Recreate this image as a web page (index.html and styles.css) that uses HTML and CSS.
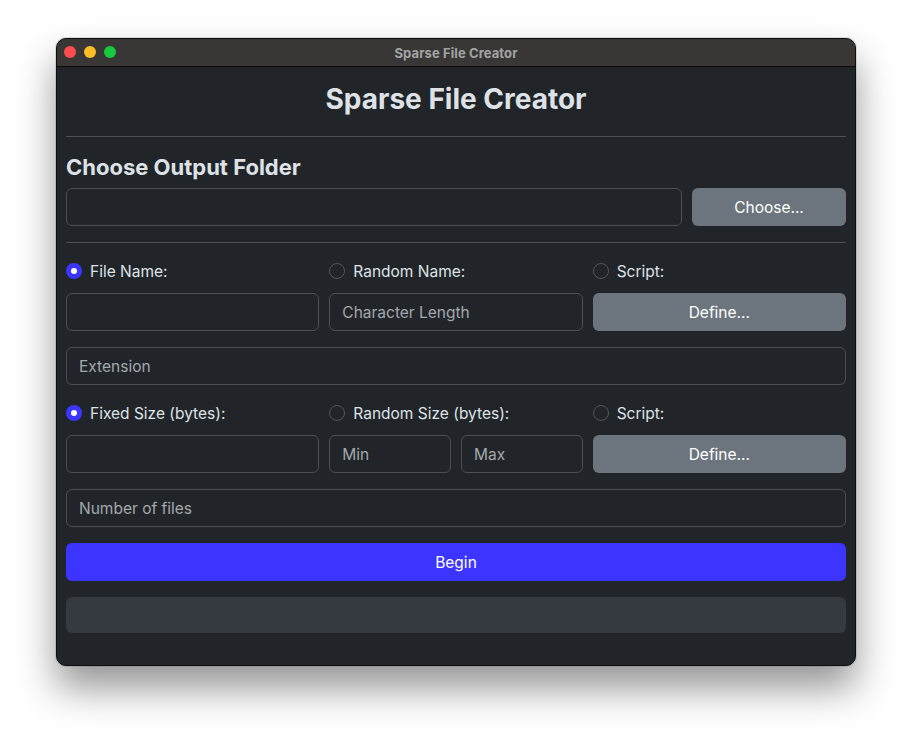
FILE: index.html
```html
<!DOCTYPE html>
<html lang="en">
<head>
<meta charset="utf-8">
<title>Sparse File Creator</title>
<link rel="stylesheet" href="styles.css">
</head>
<body>
<div class="window">
  <div class="titlebar">
    <div class="lights">
      <span class="light red"></span>
      <span class="light yellow"></span>
      <span class="light green"></span>
    </div>
    <div class="wintitle">Sparse File Creator</div>
  </div>
  <div class="content">
    <h1 class="title">Sparse File Creator</h1>
    <hr class="sep">
    <h4 class="section">Choose Output Folder</h4>
    <div class="row folder-row">
      <input class="field grow" type="text">
      <button class="btn btn-secondary choose">Choose...</button>
    </div>
    <hr class="sep sep2">
    <div class="form">
      <div class="group">
        <div class="grid3">
          <label class="radio"><span class="dot checked"></span>File Name:</label>
          <label class="radio"><span class="dot"></span>Random Name:</label>
          <label class="radio"><span class="dot"></span>Script:</label>
        </div>
        <div class="grid3">
          <input class="field" type="text">
          <input class="field" type="text" placeholder="Character Length">
          <button class="btn btn-secondary">Define...</button>
        </div>
      </div>
      <input class="field" type="text" placeholder="Extension">
      <div class="group">
        <div class="grid3">
          <label class="radio"><span class="dot checked"></span>Fixed Size (bytes):</label>
          <label class="radio"><span class="dot"></span>Random Size (bytes):</label>
          <label class="radio"><span class="dot"></span>Script:</label>
        </div>
        <div class="grid3">
          <input class="field" type="text">
          <div class="pair">
            <input class="field" type="text" placeholder="Min">
            <input class="field" type="text" placeholder="Max">
          </div>
          <button class="btn btn-secondary">Define...</button>
        </div>
      </div>
      <input class="field" type="text" placeholder="Number of files">
      <button class="btn btn-primary">Begin</button>
      <div class="progress"></div>
    </div>
  </div>
</div>
</body>
</html>
```
FILE: styles.css
```css
html, body {
  margin: 0;
  padding: 0;
  background: #ffffff;
}
body {
  width: 912px;
  height: 740px;
  overflow: hidden;
  font-family: Inter, "Liberation Sans", sans-serif;
}
.window {
  margin: 38px 0 0 56px;
  width: 800px;
  height: 628px;
  box-sizing: border-box;
  border: 1px solid #0e0e0e;
  border-radius: 10px;
  background: #212529;
  overflow: hidden;
  box-shadow: 0 22px 38px rgba(0,0,0,0.42), 0 0 0 1px rgba(0,0,0,0.1);
  display: flex;
  flex-direction: column;
}
.titlebar {
  height: 27px;
  background: #383735;
  border-bottom: 1px solid #0a0a0a;
  position: relative;
  display: flex;
  align-items: center;
  justify-content: center;
  flex-shrink: 0;
}
.lights {
  position: absolute;
  left: 7px;
  top: 7px;
  display: flex;
  gap: 8px;
}
.light {
  width: 12px;
  height: 12px;
  border-radius: 50%;
}
.red { background: #fe4b4e; }
.yellow { background: #febd25; }
.green { background: #17c93d; }
.wintitle {
  font-size: 13px;
  font-weight: 700;
  color: #a3a3a3;
  letter-spacing: 0.1px;
}
.content {
  padding: 0 9px 0 9px;
  display: flex;
  flex-direction: column;
  color: #dee2e6;
}
.title {
  margin: 15px 0 0 0;
  text-align: center;
  font-size: 28px;
  font-weight: 700;
  line-height: 34px;
  color: #dee2e6;
}
.sep {
  margin: 20px 0 0 0;
  border: 0;
  border-top: 1px solid #4c5055;
  height: 0;
}
.sep2 {
  margin-top: 16px;
}
.section {
  margin: 17px 0 0 0;
  font-size: 22px;
  font-weight: 700;
  line-height: 26px;
  color: #dee2e6;
}
.row {
  display: flex;
  gap: 10px;
}
.folder-row {
  margin-top: 8px;
}
.grow { flex: 1; }
.choose { width: 154px; flex-shrink: 0; }
.form {
  margin-top: 16px;
  display: flex;
  flex-direction: column;
  gap: 16px;
}
.group {
  display: flex;
  flex-direction: column;
  gap: 10px;
}
.grid3 {
  display: grid;
  grid-template-columns: 1fr 1fr 1fr;
  gap: 10px;
}
.pair {
  display: grid;
  grid-template-columns: 1fr 1fr;
  gap: 10px;
}
.radio {
  display: flex;
  align-items: center;
  gap: 8px;
  height: 24px;
  font-size: 15.5px;
  color: #dee2e6;
}
.dot {
  width: 16px;
  height: 16px;
  box-sizing: border-box;
  border-radius: 50%;
  border: 1px solid #52575c;
  background: #212529;
  flex-shrink: 0;
}
.dot.checked {
  border: 5px solid #3b36ff;
  background: #ffffff;
}
.field {
  height: 38px;
  box-sizing: border-box;
  border: 1px solid #495057;
  border-radius: 6px;
  background: #212529;
  color: #dee2e6;
  padding: 6px 12px;
  font-family: Inter, "Liberation Sans", sans-serif;
  font-size: 15.5px;
  min-width: 0;
  width: 100%;
  outline: none;
}
.field::placeholder {
  color: #a4a8ac;
}
.btn {
  height: 38px;
  border: 0;
  border-radius: 6px;
  font-family: Inter, "Liberation Sans", sans-serif;
  font-size: 15.5px;
  color: #ffffff;
  padding: 0 12px;
}
.btn-secondary { background: #6c757d; }
.btn-primary { background: #3b35ff; width: 100%; }
.progress {
  height: 36px;
  border-radius: 6px;
  background: #343a40;
}
```
